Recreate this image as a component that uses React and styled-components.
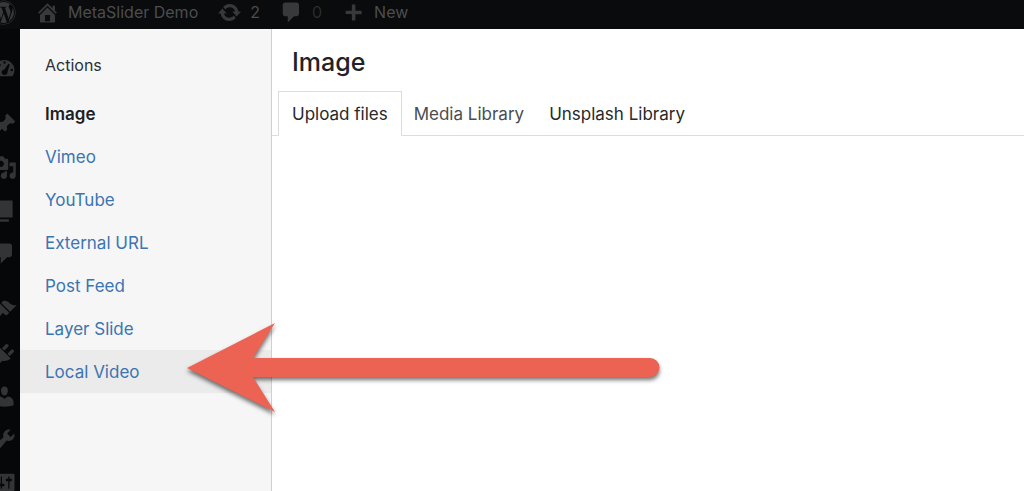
import React from "react";
import styled, { createGlobalStyle } from "styled-components";
import { FaWordpress } from "react-icons/fa";

const GlobalStyle = createGlobalStyle`
  *, *::before, *::after { box-sizing: border-box; }
  body {
    margin: 0;
    background: #050708;
    font-family: Inter, Roboto, "Liberation Sans", sans-serif;
    font-size: 17px;
    line-height: 24px;
    color: #2c3035;
  }
`;

const Shell = styled.div`
  display: flex;
  flex-direction: column;
  height: 100vh;
  overflow: hidden;
`;

const AdminBar = styled.header`
  display: flex;
  align-items: center;
  flex: none;
  height: 29px;
  padding-bottom: 5px;
  gap: 19px;
  background: #090b0d;
`;

const BarLink = styled.a`
  display: flex;
  align-items: center;
  gap: 8px;
  font-size: 16px;
  color: ${(p) => (p.$dim ? "#2b2d2f" : "#4b4d4f")};
  text-decoration: none;
  white-space: nowrap;
`;

const LogoLink = styled(BarLink)`
  width: 16px;
  justify-content: flex-end;
  color: #38393b;
`;

const Glyph = styled.svg`
  flex: none;
  width: 25px;
  height: 25px;
  fill: #38393b;
  fill-rule: evenodd;
`;

const Body = styled.div`
  display: flex;
  flex: 1;
  min-height: 0;
`;

const Rail = styled.nav`
  flex: none;
  width: 20px;
  padding-top: 17px;
  overflow: hidden;
  background: #050708;
`;

const RailLink = styled.a`
  display: flex;
  align-items: center;
  justify-content: flex-end;
  height: 43px;
  padding-right: 3px;
  margin-bottom: ${(p) => (p.$last ? "14px" : "0")};

  ${Glyph} { fill: #323436; }
`;

const Modal = styled.div`
  display: flex;
  flex: 1;
  min-width: 0;
  background: #fff;
`;

const Menu = styled.aside`
  flex: none;
  width: 252px;
  background: #f6f6f7;
  border-right: 1px solid #cfd0d2;
`;

const MenuTitle = styled.h2`
  margin: 0;
  padding: 24px 25px 0;
  height: 63px;
  font-size: 16px;
  font-weight: 400;
`;

const MenuList = styled.ul`
  margin: 0;
  padding: 0;
  list-style: none;
`;

const MenuItem = styled.li`
  position: relative;
  height: 43px;
  background: ${(p) => (p.$hover ? "#ebebeb" : "transparent")};
`;

const MenuLink = styled.a`
  display: block;
  padding: 10px 25px 9px;
  color: ${(p) => (p.$active ? "#1d2023" : "#3c74b0")};
  font-weight: ${(p) => (p.$active ? 600 : 400)};
  text-decoration: none;
`;

const Pointer = styled.svg`
  position: absolute;
  z-index: 1;
  left: 161px;
  top: -35px;
  width: 490px;
  height: 108px;
  pointer-events: none;
  filter: drop-shadow(0 3px 2px rgba(0, 0, 0, 0.55));
`;

const Content = styled.main`
  flex: 1;
  min-width: 0;
`;

const Title = styled.h1`
  margin: 0;
  padding: 17px 20px 13px;
  font-size: 25px;
  line-height: 32px;
  font-weight: 500;
  color: #1f2327;
`;

const Tabs = styled.div`
  display: flex;
  padding-left: 6px;
  border-bottom: 1px solid #dcdcde;
`;

const Tab = styled.button`
  height: 45px;
  margin: 0 -1px -1px 0;
  padding: 0 ${(p) => (p.$active ? "13px" : "12px")};
  border: 1px solid;
  border-color: ${(p) => (p.$active ? "#dcdcde #dcdcde #fff" : "transparent")};
  background: ${(p) => (p.$active ? "#fff" : "transparent")};
  color: ${(p) => (p.$muted ? "#4a4d51" : "#26292d")};
  font: inherit;
  white-space: nowrap;
`;

const paths = {
  home: "M16 8.5l1.53 1.53-1.06 1.06L10 4.6l-6.47 6.49-1.06-1.06L10 2.5l4 4v-2h2v4zm-6-2.46l6 5.99V18H4v-5.97zM12 17v-5H8v5h4z",
  update:
    "M10.2 3.28c3.53 0 6.43 2.61 6.92 6h2.08l-3.5 4-3.5-4h2.32c-.45-1.97-2.21-3.45-4.32-3.45-1.45 0-2.73.71-3.54 1.78L4.95 5.66C6.23 4.2 8.11 3.28 10.2 3.28zm-.4 13.44c-3.52 0-6.43-2.61-6.92-6H.8l3.5-4c1.17 1.33 2.33 2.67 3.5 4H5.48c.45 1.97 2.21 3.45 4.32 3.45 1.45 0 2.73-.71 3.54-1.78l1.71 1.95c-1.28 1.46-3.15 2.38-5.25 2.38z",
  comment: "M5 2h9c1.1 0 2 .9 2 2v7c0 1.1-.9 2-2 2h-2l-5 5v-5H5c-1.1 0-2-.9-2-2V4c0-1.1.9-2 2-2z",
  plus: "M8.7 3.5h2.8v5h5v2.8h-5v5H8.700v-5h-5V8.500h5z",
  dashboard:
    "M3.76 17h12.48c1.1-1.37 1.76-3.11 1.76-5 0-4.42-3.58-8-8-8s-8 3.58-8 8c0 1.89.66 3.63 1.76 5zM9 6a1 1 0 1 1 2 0a1 1 0 1 1-2 0zM5 8a1 1 0 1 1 2 0a1 1 0 1 1-2 0zM13.200 6.900l1 .5-1.800 6.200c.1 1.300-1 2.400-2.400 2.400s-2.400-1-2.300-2.300c.1-1 .9-1.800 2-1.900zM3.500 12a1 1 0 1 1 2 0a1 1 0 1 1-2 0zM14.800 12a1 1 0 1 1 2 0a1 1 0 1 1-2 0z",
  pin: "M10.44 3.02l1.82-1.82 6.36 6.35-1.83 1.82c-1.05-.68-2.48-.57-3.41.36l-.75.75c-.92.93-1.04 2.35-.35 3.41l-1.83 1.82-2.41-2.41-2.8 2.79c-.42.42-3.38 2.71-3.8 2.29s1.86-3.39 2.28-3.81l2.79-2.79L4.1 9.36l1.83-1.82c1.05.69 2.48.57 3.4-.36l.75-.75c.93-.92 1.05-2.35.36-3.41z",
  media:
    "M13 11V4c0-.55-.45-1-1-1h-1.67L9 1H5L3.67 3H2c-.55 0-1 .45-1 1v7c0 .55.45 1 1 1h10c.55 0 1-.45 1-1zM7 4.5c1.38 0 2.5 1.12 2.5 2.5S8.38 9.5 7 9.5 4.5 8.38 4.5 7 5.62 4.5 7 4.5zM14 6h5v10.5c0 1.38-1.12 2.5-2.5 2.5S14 17.88 14 16.5s1.12-2.5 2.5-2.5c.17 0 .34.02.5.05V9h-3V6zm-4 8.05V13h2v3.5c0 1.38-1.12 2.5-2.5 2.5S7 17.88 7 16.5 8.12 14 9.5 14c.17 0 .34.02.5.05z",
  slides: "M0 2h16.500v13.500H0zM2 17h11.500v2H2z",
  brush:
    "M14.48 11.06L7.41 3.99l1.5-1.5c.5-.56 2.3-.47 3.51.32 1.21.8 1.43 1.28 2.91 2.1 1.18.64 2.45 1.26 4.45.85zm-.71.71L6.7 4.7 4.93 6.47c-.39.39-.39 1.02 0 1.41l1.06 1.06c.39.39.39 1.03 0 1.42-.6.6-1.43 1.11-2.21 1.69-.35.26-.7.53-1.01.84C1.43 14.23.4 16.08 1.4 17.07c.99 1 2.84-.03 4.18-1.36.31-.31.58-.66.85-1.02.57-.78 1.08-1.61 1.69-2.21.39-.39 1.02-.39 1.41 0l1.06 1.06c.39.39 1.02.39 1.41 0z",
  plug: "M13.11 4.36L9.87 7.6 8 5.73l3.24-3.24c.35-.34 1.05-.2 1.56.32.52.51.66 1.21.31 1.55zm-8 1.77l.91-1.12 9.01 9.01-1.19.84c-.71.71-2.63 1.16-3.82 1.16H8.14L6.9 17.26c-.59.59-1.54.59-2.12 0-.59-.58-.59-1.53 0-2.12l1.24-1.24v-1.88c0-1.13-.4-3.16-.91-3.89zm7.26 3.97l3.24-3.24c.34-.35 1.04-.21 1.55.31.52.51.66 1.21.31 1.55l-3.24 3.25z",
  user: "M10 9.25c-2.27 0-2.73-3.44-2.73-3.44C7 4.02 7.82 2 9.97 2c2.16 0 2.98 2.02 2.71 3.81 0 0-.41 3.44-2.68 3.44zm0 2.57L12.72 10c2.39 0 4.52 2.33 4.52 4.53v2.49s-3.65 1.13-7.24 1.13c-3.65 0-7.24-1.13-7.24-1.13v-2.49c0-2.25 1.94-4.48 4.47-4.48z",
  wrench:
    "M16.68 9.77c-1.34 1.34-3.3 1.67-4.95.99l-5.41 6.52c-.99.99-2.59.99-3.58 0s-.99-2.59 0-3.57l6.52-5.42c-.68-1.65-.35-3.61.99-4.95 1.28-1.28 3.12-1.62 4.72-1.06l-2.89 2.89 2.82 2.82 2.86-2.87c.53 1.58.18 3.39-1.08 4.65zM3.81 16.21c.4.39 1.04.39 1.43 0 .4-.4.4-1.04 0-1.43-.39-.4-1.03-.4-1.43 0-.39.39-.39 1.03 0 1.43z",
  settings:
    "M18 16V4c0-.55-.45-1-1-1H3c-.55 0-1 .45-1 1v12c0 .55.45 1 1 1h14c.55 0 1-.45 1-1zM8 11h1c.55 0 1 .45 1 1s-.45 1-1 1H8v1.5c0 .28-.22.5-.5.5s-.5-.22-.5-.5V13H6c-.55 0-1-.45-1-1s.45-1 1-1h1V5.5c0-.28.22-.5.5-.5s.5.22.5.5V11zm5-2h-1c-.55 0-1-.45-1-1s.45-1 1-1h1V5.5c0-.28.22-.5.5-.5s.5.22.5.5V7h1c.55 0 1 .45 1 1s-.45 1-1 1h-1v5.5c0 .28-.22.5-.5.5s-.5-.22-.5-.5V9z",
};

const Icon = ({ name }) => (
  <Glyph viewBox="0 0 20 20" aria-hidden="true">
    <path d={paths[name]} />
  </Glyph>
);

const railItems = [
  ["dashboard", true],
  ["pin"],
  ["media"],
  ["slides"],
  ["comment", true],
  ["brush"],
  ["plug"],
  ["user"],
  ["wrench"],
  ["settings"],
];

const menuItems = ["Image", "Vimeo", "YouTube", "External URL", "Post Feed", "Layer Slide", "Local Video"];

export default function App() {
  return (
    <Shell>
      <GlobalStyle />
      <AdminBar>
        <LogoLink href="#" aria-label="WordPress">
          <Glyph as={FaWordpress} />
        </LogoLink>
        <BarLink href="#"><Icon name="home" />MetaSlider Demo</BarLink>
        <BarLink href="#"><Icon name="update" />2</BarLink>
        <BarLink href="#" $dim><Icon name="comment" />0</BarLink>
        <BarLink href="#"><Icon name="plus" />New</BarLink>
      </AdminBar>
      <Body>
        <Rail aria-label="Admin menu">
          {railItems.map(([name, last]) => (
            <RailLink key={name} href="#" aria-label={name} $last={last}>
              <Icon name={name} />
            </RailLink>
          ))}
        </Rail>
        <Modal>
          <Menu>
            <MenuTitle>Actions</MenuTitle>
            <MenuList>
              {menuItems.map((label) => (
                <MenuItem key={label} $hover={label === "Local Video"}>
                  <MenuLink href="#" $active={label === "Image"}>{label}</MenuLink>
                  {label === "Local Video" && (
                    <Pointer viewBox="0 0 490 108" aria-hidden="true">
                      <path
                        fill="#ec6353"
                        d="M6 53L94 8L72 43H469A9.5 9.5 0 0 1 469 62H72L94 97Z"
                      />
                    </Pointer>
                  )}
                </MenuItem>
              ))}
            </MenuList>
          </Menu>
          <Content>
            <Title>Image</Title>
            <Tabs role="tablist">
              <Tab role="tab" aria-selected="true" $active>Upload files</Tab>
              <Tab role="tab" $muted>Media Library</Tab>
              <Tab role="tab">Unsplash Library</Tab>
            </Tabs>
          </Content>
        </Modal>
      </Body>
    </Shell>
  );
}
